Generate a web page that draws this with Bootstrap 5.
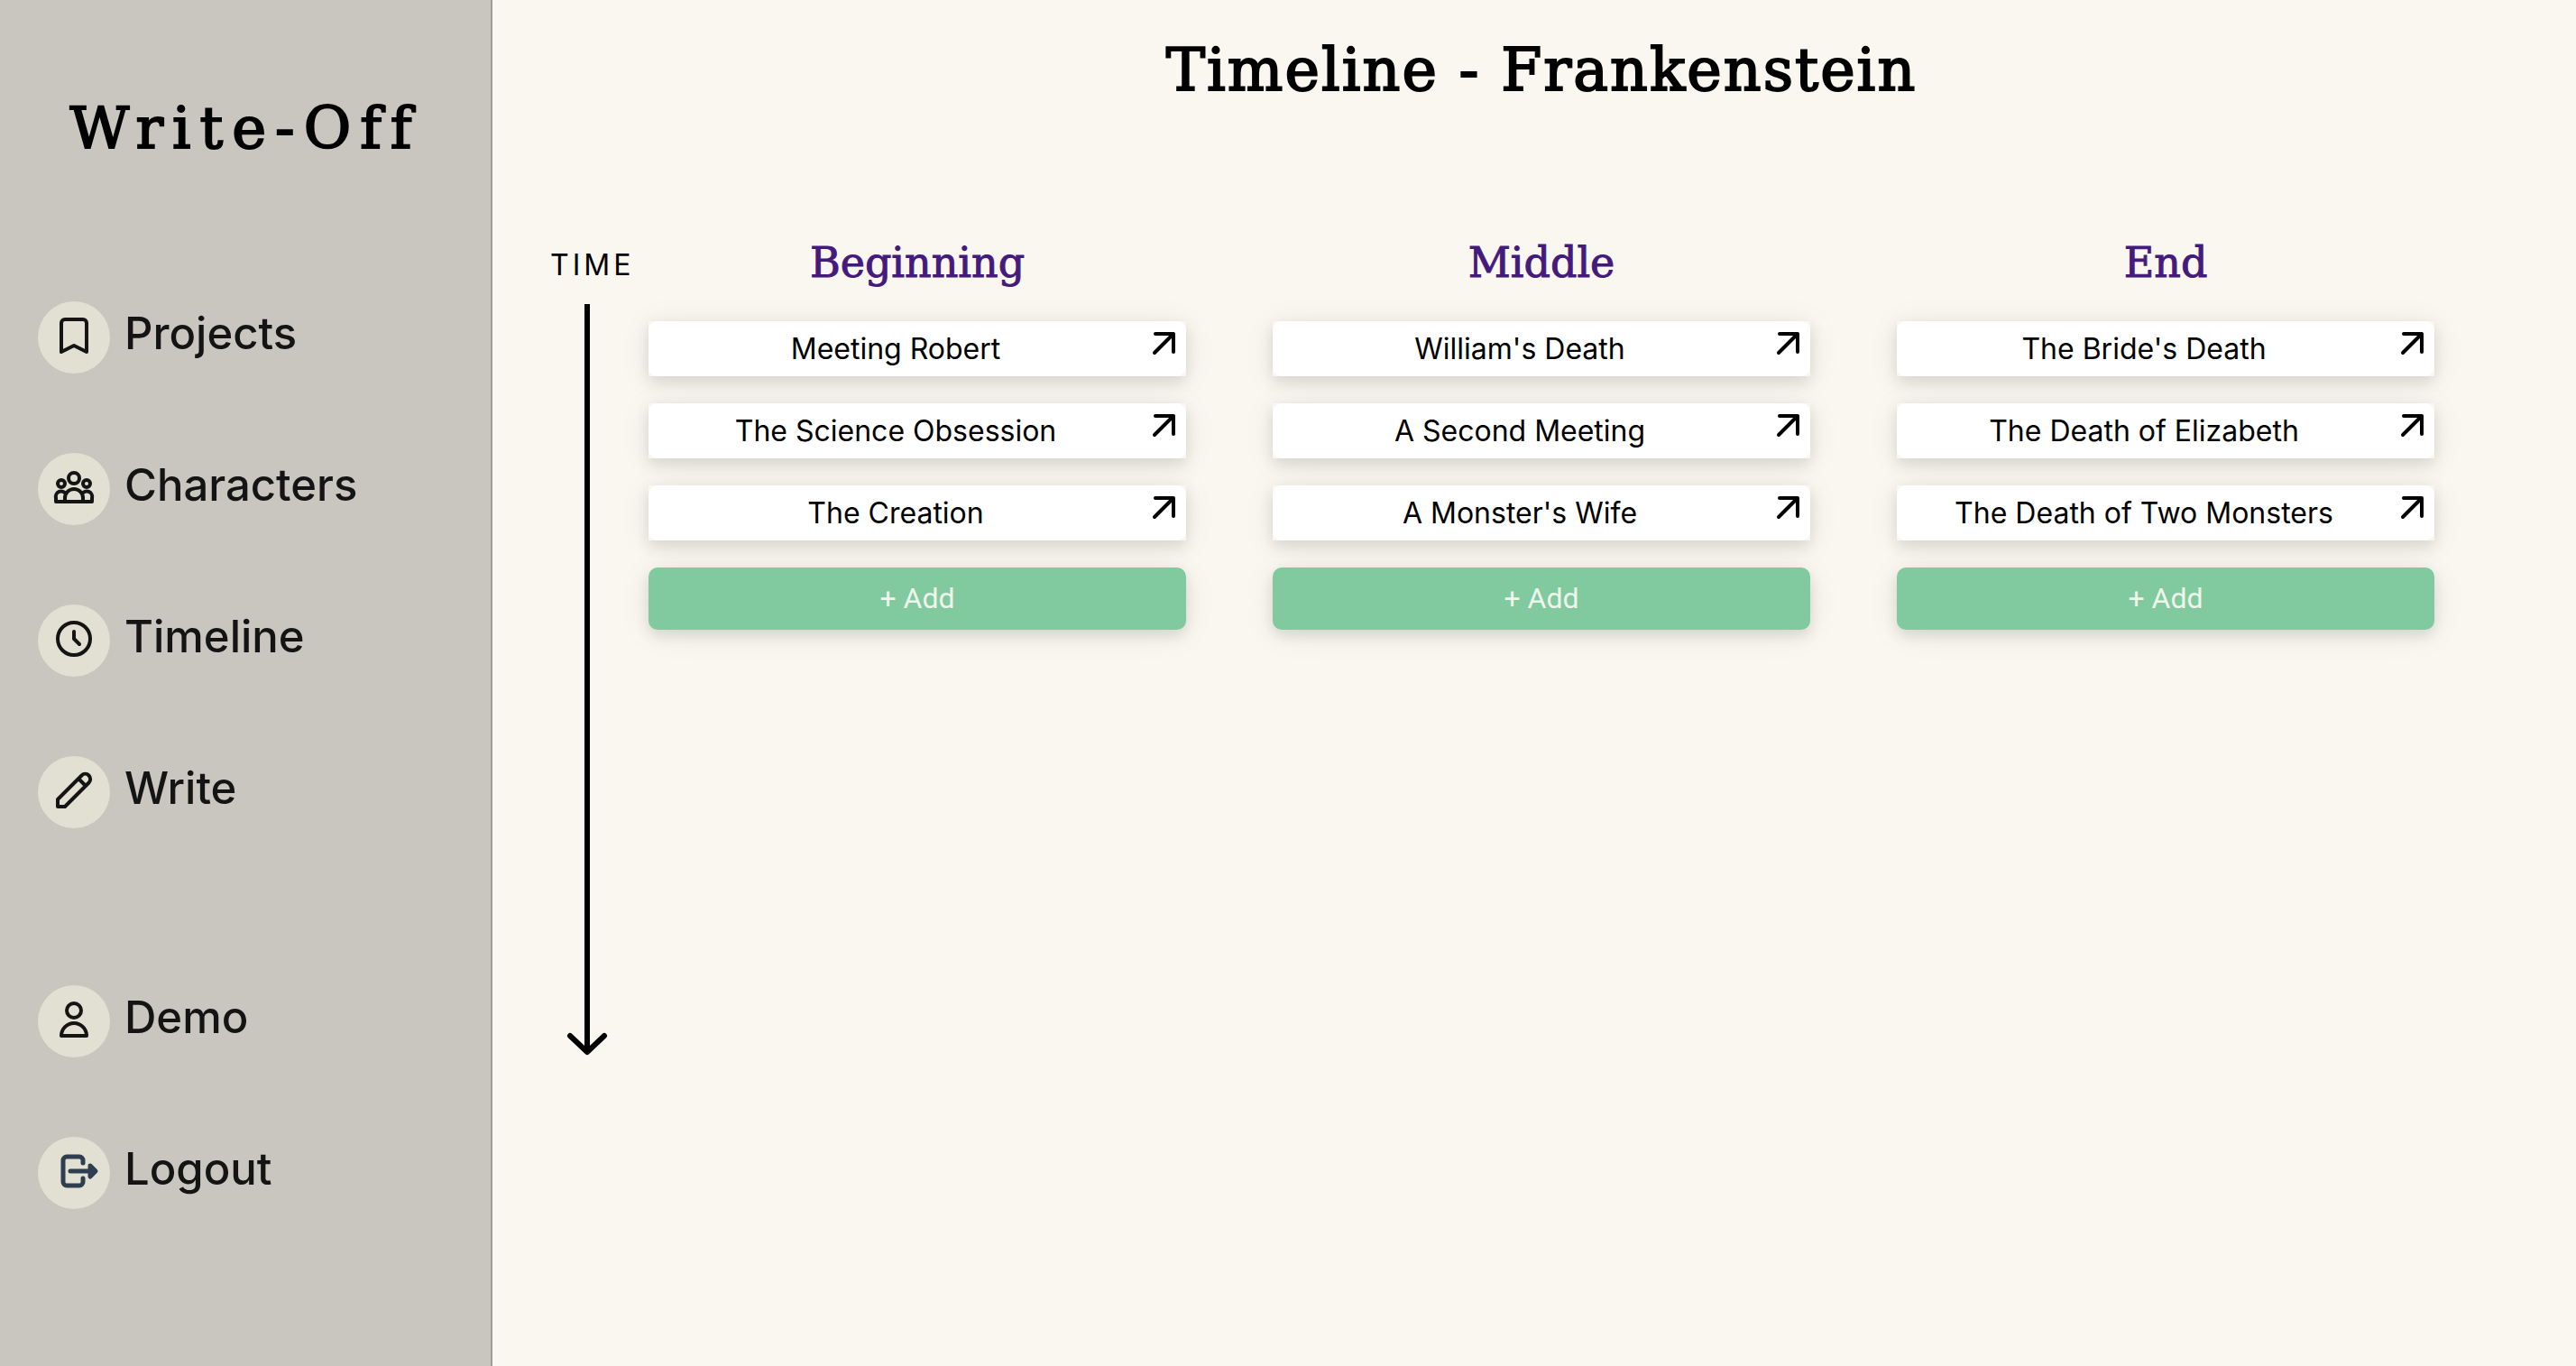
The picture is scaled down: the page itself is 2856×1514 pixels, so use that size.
<!DOCTYPE html>
<html lang="en">
<head>
<meta charset="utf-8">
<meta name="viewport" content="width=device-width, initial-scale=1">
<title>Write-Off | Timeline</title>
<link href="https://cdn.jsdelivr.net/npm/bootstrap@5.3.0/dist/css/bootstrap.min.css" rel="stylesheet">
<style>
  body { background: #faf7f0; color: #000; font-family: Inter, "Open Sans", sans-serif; font-size: 32px; }
  .slab { font-family: "DejaVu Serif", serif; font-weight: 400; -webkit-text-stroke: 1px currentColor; }
  .sidebar { flex: 0 0 546px; background: #c9c6bf; border-right: 2px solid #9f9d98; padding: 102px 0 80px; }
  .brand { font-size: 64px; line-height: 80px; letter-spacing: 10px; margin-bottom: 152px; color: #000; -webkit-text-stroke-width: 2px; }
  .side-nav { gap: 88px; padding-left: 42px; }
  .side-link { gap: 16px; font-size: 49px; line-height: 72px; font-weight: 500; color: #141414; }
  .side-link svg { width: 80px; height: 80px; background: #e2dfd3; border-radius: 50%; }
  .account { margin-top: 86px; }
  .icon { fill: none; stroke: currentColor; stroke-width: 4; stroke-linecap: round; stroke-linejoin: round; }
  .icon-logout { stroke: #2e3d50; stroke-width: 5; }
  .board { padding: 38px 48px 0 64px; }
  .board-title { font-size: 65px; line-height: 80px; letter-spacing: 2px; margin-bottom: 143px; -webkit-text-stroke-width: 2px; }
  .time-axis { flex: 0 0 109px; }
  .time-label { line-height: 66px; letter-spacing: 4px; }
  .axis-arrow { width: 50px; height: 55vh; margin-top: 10px; }
  .axis-line { width: 6px; background: #000; }
  .axis-arrow svg { width: 50px; height: 30px; stroke-width: 6; }
  .acts { gap: 96px; margin-right: 109px; }
  .act { flex: 1 1 0; min-width: 0; }
  .act-title { font-size: 46px; line-height: 60px; margin-bottom: 35px; color: #441a7d; }
  .events { gap: 30px; }
  .raised { box-shadow: 0 6px 16px rgba(0, 0, 0, .12), 0 4px 40px rgba(0, 0, 0, .06); }
  .event-link { color: #000; line-height: 61px; background: #faf7f0; }
  .event-face { background: #fff; border-radius: 10px; }
  .event-face svg { width: 48px; height: 48px; }
  .btn-add { --bs-btn-bg: #81c99e; --bs-btn-color: #eef5ea; --bs-btn-hover-bg: #6fba8d; --bs-btn-hover-color: #fff; border: 0; border-radius: 10px; padding: 0; font-family: Roboto, sans-serif; font-size: 32px; line-height: 69px; }
</style>
<script src="https://cdn.jsdelivr.net/npm/bootstrap@5.3.0/dist/js/bootstrap.bundle.min.js"></script>
</head>
<body>
<svg class="d-none" aria-hidden="true">
  <symbol id="open" viewBox="0 0 48 48"><path d="M14 14H34V34M34 14L13 35"/></symbol>
</svg>
<div class="d-flex min-vh-100">
  <aside class="sidebar">
    <a href="#" class="brand slab d-block text-center text-decoration-none">Write-Off</a>
    <nav class="side-nav d-flex flex-column" aria-label="Main">
      <a href="#" class="side-link d-flex align-items-start text-decoration-none">
        <svg class="icon" viewBox="0 0 80 80"><path d="M26 56V24a4 4 0 0 1 4-4H50a4 4 0 0 1 4 4V56L40 49Z"/></svg>Projects</a>
      <a href="#" class="side-link d-flex align-items-start text-decoration-none">
        <svg class="icon" viewBox="0 0 80 80"><circle cx="40" cy="28" r="6"/><circle cx="26" cy="34" r="4"/><circle cx="54" cy="34" r="4"/><path d="M30 54V50a10 10 0 0 1 20 0V54M31 45.500A6 6 0 0 0 20 50V54H60V50A6 6 0 0 0 49 45.500"/></svg>Characters</a>
      <a href="#" class="side-link d-flex align-items-start text-decoration-none">
        <svg class="icon" viewBox="0 0 80 80"><circle cx="40" cy="38" r="18"/><path d="M40 30V38L46 44"/></svg>Timeline</a>
      <a href="#" class="side-link d-flex align-items-start text-decoration-none">
        <svg class="icon" viewBox="0 0 80 80"><path d="M22 56V48L48.500 21.500a5.600 5.600 0 0 1 8 8L30 56ZM45 25L53 33"/></svg>Write</a>
      <a href="#" class="side-link account d-flex align-items-start text-decoration-none">
        <svg class="icon" viewBox="0 0 80 80"><circle cx="40" cy="28" r="8"/><path d="M26 56a14 14 0 0 1 28 0Z"/></svg>Demo</a>
      <a href="#" class="side-link d-flex align-items-start text-decoration-none">
        <svg class="icon icon-logout" viewBox="0 0 80 80"><path d="M50 29V26a4 4 0 0 0-4-4H32a4 4 0 0 0-4 4V50a4 4 0 0 0 4 4H46a4 4 0 0 0 4-4V46M36 38H62M58 32L64 38L58 44Z"/></svg>Logout</a>
    </nav>
  </aside>

  <main class="board flex-grow-1">
    <h1 class="board-title slab text-center">Timeline - Frankenstein</h1>
    <div class="d-flex align-items-start">
      <div class="time-axis">
        <div class="time-label">TIME</div>
        <div class="axis-arrow d-flex flex-column align-items-center ms-3">
          <div class="axis-line flex-grow-1"></div>
          <svg class="icon flex-shrink-0" viewBox="0 0 50 30"><path d="M25 0V25" stroke-linecap="butt"/><path d="M6 8L25 26L44 8"/></svg>
        </div>
      </div>
      <div class="acts d-flex flex-grow-1">
        <section class="act">
          <h2 class="act-title slab text-center">Beginning</h2>
          <div class="events d-flex flex-column">
            <a href="#" class="event-link raised text-decoration-none"><span class="event-face d-flex"><span class="flex-grow-1 text-center">Meeting Robert</span><svg class="icon"><use href="#open"/></svg></span></a>
            <a href="#" class="event-link raised text-decoration-none"><span class="event-face d-flex"><span class="flex-grow-1 text-center">The Science Obsession</span><svg class="icon"><use href="#open"/></svg></span></a>
            <a href="#" class="event-link raised text-decoration-none"><span class="event-face d-flex"><span class="flex-grow-1 text-center">The Creation</span><svg class="icon"><use href="#open"/></svg></span></a>
            <button type="button" class="btn btn-add raised">+ Add</button>
          </div>
        </section>
        <section class="act">
          <h2 class="act-title slab text-center">Middle</h2>
          <div class="events d-flex flex-column">
            <a href="#" class="event-link raised text-decoration-none"><span class="event-face d-flex"><span class="flex-grow-1 text-center">William's Death</span><svg class="icon"><use href="#open"/></svg></span></a>
            <a href="#" class="event-link raised text-decoration-none"><span class="event-face d-flex"><span class="flex-grow-1 text-center">A Second Meeting</span><svg class="icon"><use href="#open"/></svg></span></a>
            <a href="#" class="event-link raised text-decoration-none"><span class="event-face d-flex"><span class="flex-grow-1 text-center">A Monster's Wife</span><svg class="icon"><use href="#open"/></svg></span></a>
            <button type="button" class="btn btn-add raised">+ Add</button>
          </div>
        </section>
        <section class="act">
          <h2 class="act-title slab text-center">End</h2>
          <div class="events d-flex flex-column">
            <a href="#" class="event-link raised text-decoration-none"><span class="event-face d-flex"><span class="flex-grow-1 text-center">The Bride's Death</span><svg class="icon"><use href="#open"/></svg></span></a>
            <a href="#" class="event-link raised text-decoration-none"><span class="event-face d-flex"><span class="flex-grow-1 text-center">The Death of Elizabeth</span><svg class="icon"><use href="#open"/></svg></span></a>
            <a href="#" class="event-link raised text-decoration-none"><span class="event-face d-flex"><span class="flex-grow-1 text-center">The Death of Two Monsters</span><svg class="icon"><use href="#open"/></svg></span></a>
            <button type="button" class="btn btn-add raised">+ Add</button>
          </div>
        </section>
      </div>
    </div>
  </main>
</div>
</body>
</html>
